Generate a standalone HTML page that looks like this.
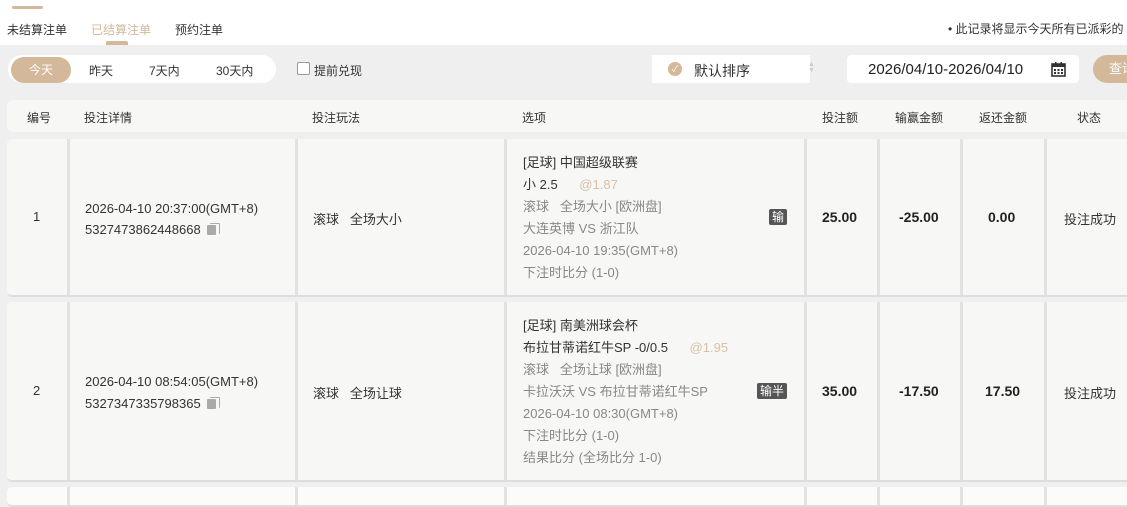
<!DOCTYPE html>
<html><head><meta charset="utf-8"><style>
*{margin:0;padding:0;box-sizing:border-box}
body{width:1127px;height:495px;overflow:hidden;background:#efefef;font-family:"Liberation Sans","Noto Sans CJK SC",sans-serif;font-size:13px;color:#333;position:relative}
.a{position:absolute;white-space:nowrap}
.top{position:absolute;left:0;top:0;width:1127px;height:45px;background:#fff}
.row{position:absolute;left:7px;width:1130px;background:#f7f7f5;border-bottom:2px solid #ddd;border-radius:5px}
.sep{position:absolute;top:0;bottom:0;width:3px;background:#e2e2e0}
.b{font-weight:bold;font-size:14px;color:#222}
.g{color:#888}
.h{font-size:12px}
.tag{position:absolute;background:#555;color:#fff;font-size:12px;padding:0 3px;line-height:16px;border-radius:2px}
.copy{display:inline-block;width:12px;height:12px;position:relative;margin-left:6px;vertical-align:-1px}
.copy:before{content:"";position:absolute;left:3px;top:0;width:9px;height:10px;border:1.5px solid #aaa;border-left:none;border-bottom:none;border-radius:1px}
.copy:after{content:"";position:absolute;left:0;top:2px;width:9px;height:10px;background:#aaa;border-radius:1px}
</style></head><body>
<div class="top">
 <div class="a" style="left:12px;top:6px;width:31px;height:3px;background:#d4b89a;border-radius:2px"></div>
 <div class="a h" style="left:7px;top:21px">未结算注单</div>
 <div class="a h" style="left:91px;top:21px;color:#d4b89a">已结算注单</div>
 <div class="a h" style="left:175px;top:21px">预约注单</div>
 <div class="a" style="left:106px;top:41px;width:22px;height:4px;background:#d4b89a;border-radius:2px 2px 0 0"></div>
 <div class="a" style="left:948px;top:20px;font-size:12px">• 此记录将显示今天所有已派彩的</div>
</div>
<div class="a" style="left:8px;top:55px;width:268px;height:28px;background:#fff;border-radius:14px"></div>
<div class="a" style="left:11px;top:57px;width:60px;height:26px;background:#d4b89a;border-radius:13px;color:#fff;text-align:center;line-height:26px;font-size:12px">今天</div>
<div class="a h" style="left:89px;top:62px">昨天</div>
<div class="a h" style="left:149px;top:62px">7天内</div>
<div class="a h" style="left:216px;top:62px">30天内</div>
<div class="a" style="left:297px;top:62px;width:13px;height:13px;border:1px solid #999;border-radius:2px;background:#fff"></div>
<div class="a h" style="left:314px;top:62px">提前兑现</div>
<div class="a" style="left:652px;top:55px;width:158px;height:28px;background:#fff"></div>
<div class="a" style="left:668px;top:62px;width:14px;height:14px;border-radius:7px;background:#d4b89a;color:#fff;font-size:9px;text-align:center;line-height:14px">✓</div>
<div class="a" style="left:694px;top:61px;font-size:14px">默认排序</div>
<div class="a" style="left:808px;top:62px;color:#ccc;font-size:7px;line-height:6px">▲<br>▼</div>
<div class="a" style="left:847px;top:55px;width:232px;height:28px;background:#fff;border-radius:4px"></div>
<div class="a" style="left:868px;top:61px;font-size:15px;color:#222">2026/04/10-2026/04/10</div>
<svg class="a" style="left:1051px;top:62px" width="15" height="15" viewBox="0 0 15 15"><rect x="1" y="2" width="13" height="12" fill="none" stroke="#333" stroke-width="1.6"/><rect x="1" y="2" width="13" height="3" fill="#333"/><rect x="4" y="0" width="1.5" height="3" fill="#333"/><rect x="9.5" y="0" width="1.5" height="3" fill="#333"/><g fill="#333"><rect x="3" y="7" width="2" height="2"/><rect x="6.5" y="7" width="2" height="2"/><rect x="10" y="7" width="2" height="2"/><rect x="3" y="10" width="2" height="2"/><rect x="6.5" y="10" width="2" height="2"/><rect x="10" y="10" width="2" height="2"/></g></svg>
<div class="a" style="left:1093px;top:55px;width:60px;height:28px;background:#d4b89a;border-radius:14px;color:#fff;line-height:28px;padding-left:16px">查询</div>

<div class="a" style="left:7px;top:100px;width:1130px;height:32px;background:#f7f7f5;border-radius:6px"></div>
<div class="a h" style="left:27px;top:109px">编号</div>
<div class="a h" style="left:84px;top:109px">投注详情</div>
<div class="a h" style="left:312px;top:109px">投注玩法</div>
<div class="a h" style="left:522px;top:109px">选项</div>
<div class="a h" style="left:822px;top:109px">投注额</div>
<div class="a h" style="left:895px;top:109px">输赢金额</div>
<div class="a h" style="left:979px;top:109px">返还金额</div>
<div class="a h" style="left:1077px;top:109px">状态</div>

<div class="row" style="top:139px;height:158px">
 <div class="sep" style="left:60px"></div><div class="sep" style="left:288px"></div><div class="sep" style="left:497px"></div><div class="sep" style="left:797px"></div><div class="sep" style="left:870px"></div><div class="sep" style="left:953px"></div><div class="sep" style="left:1037px"></div>
 <div class="a" style="left:26px;top:70px">1</div>
 <div class="a" style="left:78px;top:59px;line-height:21px">2026-04-10 20:37:00(GMT+8)<br>5327473862448668<span class="copy"></span></div>
 <div class="a" style="left:306px;top:70px">滚球&nbsp;&nbsp;&nbsp;全场大小</div>
 <div class="a" style="left:516px;top:13px;line-height:22px">[足球] 中国超级联赛<br>小 2.5 <span style="color:#d9c0a6;margin-left:18px">@1.87</span><br><span class="g">滚球&nbsp;&nbsp;&nbsp;全场大小 [欧洲盘]<br>大连英博 VS 浙江队<br>2026-04-10 19:35(GMT+8)<br>下注时比分 (1-0)</span></div>
 <div class="tag" style="left:762px;top:70px">输</div>
 <div class="a b" style="left:815px;top:70px">25.00</div>
 <div class="a b" style="left:892px;top:70px">-25.00</div>
 <div class="a b" style="left:981px;top:70px">0.00</div>
 <div class="a" style="left:1057px;top:70px">投注成功</div>
</div>

<div class="row" style="top:302px;height:180px">
 <div class="sep" style="left:60px"></div><div class="sep" style="left:288px"></div><div class="sep" style="left:497px"></div><div class="sep" style="left:797px"></div><div class="sep" style="left:870px"></div><div class="sep" style="left:953px"></div><div class="sep" style="left:1037px"></div>
 <div class="a" style="left:26px;top:81px">2</div>
 <div class="a" style="left:78px;top:69px;line-height:22px">2026-04-10 08:54:05(GMT+8)<br>5327347335798365<span class="copy"></span></div>
 <div class="a" style="left:306px;top:81px">滚球&nbsp;&nbsp;&nbsp;全场让球</div>
 <div class="a" style="left:516px;top:13px;line-height:22px">[足球] 南美洲球会杯<br>布拉甘蒂诺红牛SP -0/0.5 <span style="color:#d9c0a6;margin-left:18px">@1.95</span><br><span class="g">滚球&nbsp;&nbsp;&nbsp;全场让球 [欧洲盘]<br>卡拉沃沃 VS 布拉甘蒂诺红牛SP<br>2026-04-10 08:30(GMT+8)<br>下注时比分 (1-0)<br>结果比分 (全场比分 1-0)</span></div>
 <div class="tag" style="left:750px;top:81px">输半</div>
 <div class="a b" style="left:815px;top:81px">35.00</div>
 <div class="a b" style="left:892px;top:81px">-17.50</div>
 <div class="a b" style="left:978px;top:81px">17.50</div>
 <div class="a" style="left:1057px;top:81px">投注成功</div>
</div>

<div class="row" style="top:487px;height:20px;background:#fbfbfa">
 <div class="sep" style="left:60px"></div><div class="sep" style="left:288px"></div><div class="sep" style="left:497px"></div><div class="sep" style="left:797px"></div><div class="sep" style="left:870px"></div><div class="sep" style="left:953px"></div><div class="sep" style="left:1037px"></div>
</div>
</body></html>
